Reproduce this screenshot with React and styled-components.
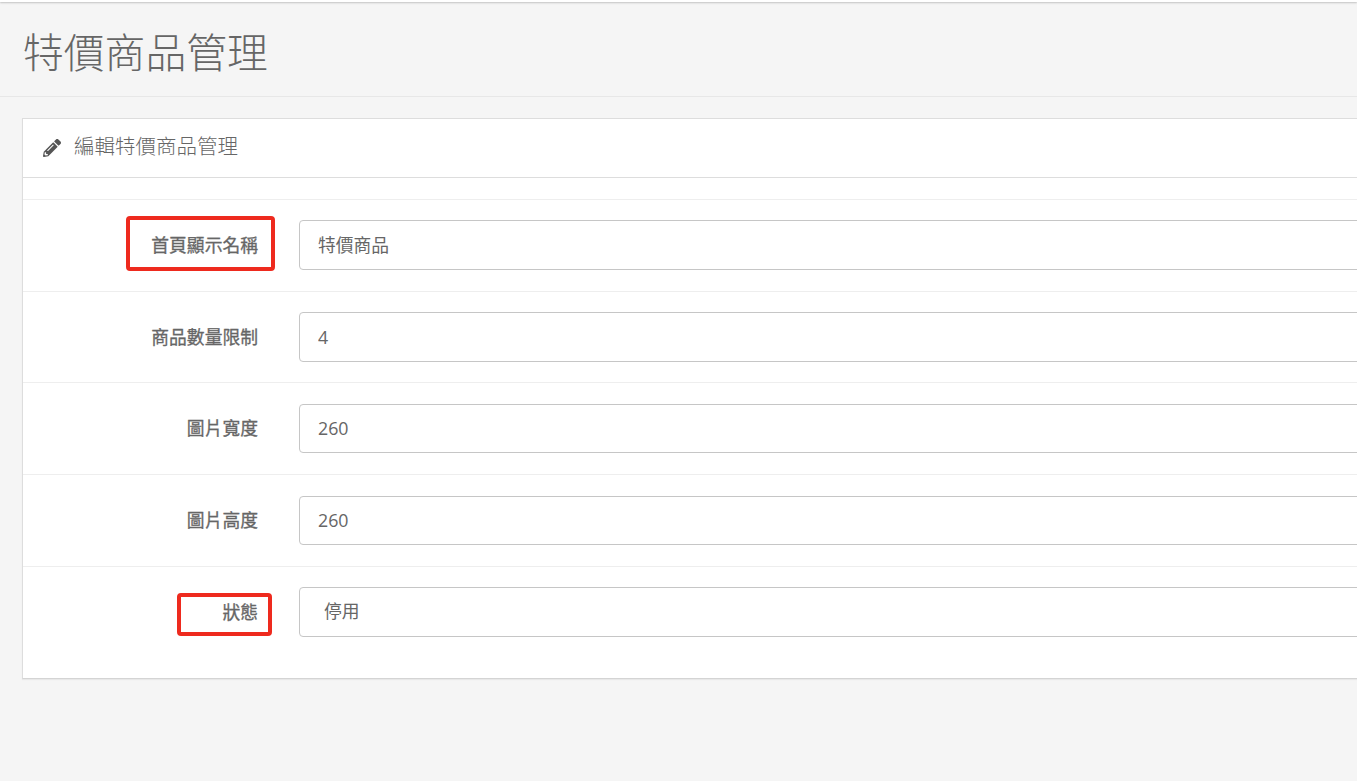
import React from "react"
import styled, { createGlobalStyle } from "styled-components"
import { FaPencilAlt } from "react-icons/fa"

const fields = [
  { label: "首頁顯示名稱", value: "特價商品", height: 92, inputHeight: 50, lift: 3 },
  { label: "商品數量限制", value: "4", height: 91, inputHeight: 50, lift: 0 },
  { label: "圖片寬度", value: "260", height: 92, inputHeight: 49, lift: 1, top: 1 },
  { label: "圖片高度", value: "260", height: 92, inputHeight: 49, lift: 1, top: 1 },
]

const App = () => (
  <Page>
    <GlobalStyle />
    <TopBar />
    <PageHeader>
      <PageTitle>特價商品管理</PageTitle>
    </PageHeader>
    <Panel>
      <PanelHeading>
        <FaPencilAlt size={18} />
        <PanelTitle>編輯特價商品管理</PanelTitle>
      </PanelHeading>
      <BlankRow />
      {fields.map((field) => (
        <FormRow key={field.label} $height={field.height}>
          <Label>{field.label}</Label>
          <Input
            readOnly
            value={field.value}
            $height={field.inputHeight}
            $top={field.top}
            $lift={field.lift}
          />
        </FormRow>
      ))}
      <StatusRow $height={112}>
        <Label>狀態</Label>
        <SelectBox>停用</SelectBox>
      </StatusRow>
    </Panel>
    <Highlight $left={126} $top={216} $width={149} $height={55} />
    <Highlight $left={177} $top={593} $width={95} $height={43} />
  </Page>
)

export default App

const GlobalStyle = createGlobalStyle`
  html, body {
    margin: 0;
    height: 100%;
    overflow: hidden;
    background: #f5f5f5;
  }
`

const Page = styled.div`
  position: relative;
  width: 1357px;
  height: 781px;
  overflow: hidden;
  background: #f5f5f5;
  color: #555;
  font-family: "Open Sans", "Noto Sans CJK TC", sans-serif;
`

const TopBar = styled.div`
  height: 2px;
  background: #fff;
  box-shadow: 0 1px 2px rgba(0, 0, 0, 0.22);
`

const PageHeader = styled.div`
  box-sizing: border-box;
  height: 95px;
  padding: 7px 0 0 23px;
  display: flex;
  align-items: center;
  border-bottom: 1px solid #e7e7e7;
`

const PageTitle = styled.h1`
  margin: 0;
  font-size: 40.8px;
  font-weight: 300;
  line-height: 1.1;
  color: #666;
`

const Panel = styled.div`
  box-sizing: border-box;
  width: 1420px;
  height: 561px;
  margin: 21px 0 0 22px;
  background: #fff;
  border: 1px solid #ddd;
  border-bottom-color: #d4d4d4;
  box-shadow: 0 1px 1px rgba(0, 0, 0, 0.05);
`

const PanelHeading = styled.div`
  box-sizing: border-box;
  height: 59px;
  padding: 0 0 1px 20px;
  display: flex;
  align-items: center;
  gap: 13px;
  border-bottom: 1px solid #ddd;
`

const PanelTitle = styled.span`
  padding-bottom: 6px;
  font-size: 20.5px;
  font-weight: 300;
  color: #666;
`

const BlankRow = styled.div`
  height: 21px;
  border-bottom: 1px solid #eee;
`

const FormRow = styled.div`
  box-sizing: border-box;
  height: ${(props) => props.$height}px;
  padding-top: 20px;
  display: flex;
  align-items: flex-start;
  border-bottom: 1px solid #eee;
`

const StatusRow = styled(FormRow)`
  border-bottom: none;
`

const Label = styled.label`
  box-sizing: border-box;
  width: 235px;
  line-height: 50px;
  text-align: right;
  font-size: 17.8px;
  font-weight: 400;
  color: #666;
  -webkit-text-stroke: 0.3px #666;
  flex-shrink: 0;
`

const Input = styled.input`
  box-sizing: border-box;
  width: 1200px;
  height: ${(props) => props.$height}px;
  margin: ${(props) => props.$top || 0}px 0 0 41px;
  padding: 0 18px ${(props) => props.$lift}px;
  border: 1px solid #c6c6c6;
  border-radius: 4px;
  background: #fff;
  color: #666;
  font-family: inherit;
  font-size: 17.8px;
  outline: none;
`

const SelectBox = styled.div`
  box-sizing: border-box;
  width: 1200px;
  height: 50px;
  margin-left: 41px;
  padding: 0 24px;
  border: 1px solid #c6c6c6;
  border-radius: 4px;
  color: #666;
  font-size: 17.8px;
  line-height: 46px;
`

const Highlight = styled.div`
  position: absolute;
  box-sizing: border-box;
  left: ${(props) => props.$left}px;
  top: ${(props) => props.$top}px;
  width: ${(props) => props.$width}px;
  height: ${(props) => props.$height}px;
  border: 4px solid #ee2a1e;
  border-radius: 4px;
`
